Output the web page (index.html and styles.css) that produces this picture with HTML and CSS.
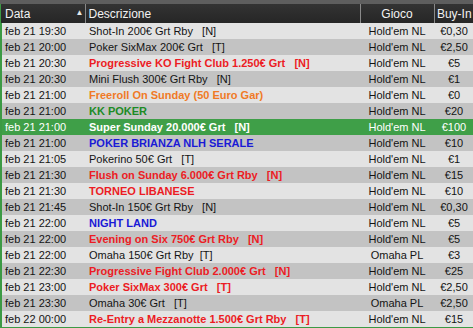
FILE: index.html
```html
<!DOCTYPE html>
<html>
<head>
<meta charset="utf-8">
<link rel="stylesheet" href="styles.css">
</head>
<body>
<div class="topstrip"></div>
<table class="grid">
  <colgroup>
    <col class="c-data"><col class="c-desc"><col class="c-game"><col class="c-buy">
  </colgroup>
  <thead>
    <tr>
      <th class="h-data">Data<span class="arrow">▲</span></th>
      <th class="h-desc">Descrizione</th>
      <th class="h-game">Gioco</th>
      <th class="h-buy">Buy-In</th>
    </tr>
  </thead>
  <tbody>
    <tr class="l"><td>feb 21 19:30</td><td class="d">Shot-In 200€ Grt Rby   [N]</td><td class="g">Hold'em NL</td><td class="b">€0,30</td></tr>
    <tr class="k"><td>feb 21 20:00</td><td class="d">Poker SixMax 200€ Grt   [T]</td><td class="g">Hold'em NL</td><td class="b">€2,50</td></tr>
    <tr class="l"><td>feb 21 20:30</td><td class="d red">Progressive KO Fight Club 1.250€ Grt   [N]</td><td class="g">Hold'em NL</td><td class="b">€5</td></tr>
    <tr class="k"><td>feb 21 20:30</td><td class="d">Mini Flush 300€ Grt Rby   [N]</td><td class="g">Hold'em NL</td><td class="b">€1</td></tr>
    <tr class="l"><td>feb 21 21:00</td><td class="d orange">Freeroll On Sunday (50 Euro Gar)</td><td class="g">Hold'em NL</td><td class="b">€0</td></tr>
    <tr class="k"><td>feb 21 21:00</td><td class="d green">KK POKER</td><td class="g">Hold'em NL</td><td class="b">€20</td></tr>
    <tr class="sel"><td>feb 21 21:00</td><td class="d bold">Super Sunday 20.000€ Grt   [N]</td><td class="g">Hold'em NL</td><td class="b">€100</td></tr>
    <tr class="k"><td>feb 21 21:00</td><td class="d blue">POKER BRIANZA NLH SERALE</td><td class="g">Hold'em NL</td><td class="b">€10</td></tr>
    <tr class="l"><td>feb 21 21:05</td><td class="d">Pokerino 50€ Grt   [T]</td><td class="g">Hold'em NL</td><td class="b">€1</td></tr>
    <tr class="k"><td>feb 21 21:30</td><td class="d red">Flush on Sunday 6.000€ Grt Rby   [N]</td><td class="g">Hold'em NL</td><td class="b">€15</td></tr>
    <tr class="l"><td>feb 21 21:30</td><td class="d red">TORNEO LIBANESE</td><td class="g">Hold'em NL</td><td class="b">€10</td></tr>
    <tr class="k"><td>feb 21 21:45</td><td class="d">Shot-In 150€ Grt Rby   [N]</td><td class="g">Hold'em NL</td><td class="b">€0,30</td></tr>
    <tr class="l"><td>feb 21 22:00</td><td class="d blue">NIGHT LAND</td><td class="g">Hold'em NL</td><td class="b">€5</td></tr>
    <tr class="k"><td>feb 21 22:00</td><td class="d red">Evening on Six 750€ Grt Rby   [N]</td><td class="g">Hold'em NL</td><td class="b">€5</td></tr>
    <tr class="l"><td>feb 21 22:00</td><td class="d">Omaha 150€ Grt Rby  [T]</td><td class="g">Omaha PL</td><td class="b">€3</td></tr>
    <tr class="k"><td>feb 21 22:30</td><td class="d red">Progressive Fight Club 2.000€ Grt   [N]</td><td class="g">Hold'em NL</td><td class="b">€25</td></tr>
    <tr class="l"><td>feb 21 23:00</td><td class="d red">Poker SixMax 300€ Grt   [T]</td><td class="g">Hold'em NL</td><td class="b">€2,50</td></tr>
    <tr class="k"><td>feb 21 23:30</td><td class="d">Omaha 30€ Grt   [T]</td><td class="g">Omaha PL</td><td class="b">€2,50</td></tr>
    <tr class="l"><td>feb 22 00:00</td><td class="d red">Re-Entry a Mezzanotte 1.500€ Grt Rby   [T]</td><td class="g">Hold'em NL</td><td class="b">€15</td></tr>
  </tbody>
</table>
</body>
</html>
```
FILE: styles.css
```css
html, body {
  margin: 0;
  padding: 0;
  background: #3c9a44;
  width: 473px;
  height: 328px;
  overflow: hidden;
  font-family: "Liberation Sans", Arial, sans-serif;
  font-size: 11px;
}
.topstrip {
  height: 4px;
  background: #5e5e5e;
}
.grid {
  border-collapse: collapse;
  table-layout: fixed;
  width: 473px;
}
.c-data { width: 84px; }
.c-desc { width: 275px; }
.c-game { width: 74px; }
.c-buy { width: 40px; }
thead tr {
  height: 19px;
  background: linear-gradient(#333333, #262626);
}
th {
  color: #f2f2f2;
  font-weight: normal;
  font-size: 12px;
  padding: 0;
  border-left: 1px solid #8a8a8a;
  white-space: nowrap;
  overflow: hidden;
}
th.h-data {
  border-left: none;
  text-align: left;
  padding-left: 4px;
  position: relative;
}
.arrow {
  position: absolute;
  right: 1px;
  top: 4px;
  font-size: 8px;
  color: #e8e8e8;
}
th.h-desc { text-align: left; padding-left: 3px; }
th.h-game { text-align: center; }
th.h-buy { text-align: center; }
tbody tr { height: 16px; }
td {
  padding: 0;
  color: #141414;
  white-space: pre;
  overflow: hidden;
}
td:first-child { padding-left: 3px; border-left: 2px solid #3c9a44; }
tr.l { background: #e3e3e3; }
tr.k { background: #c3c3c3; }
tr.sel { background: #3f9f48; }
tr.sel td { color: #ffffff; }
td.d { padding-left: 4px; }
td.g, td.b { text-align: center; }
.bold, .red, .orange, .green, .blue { font-weight: bold; }
.red { color: #ec1c24; }
.orange { color: #f07a26; }
.green { color: #1d8b25; }
.blue { color: #1a1ad6; }
```
